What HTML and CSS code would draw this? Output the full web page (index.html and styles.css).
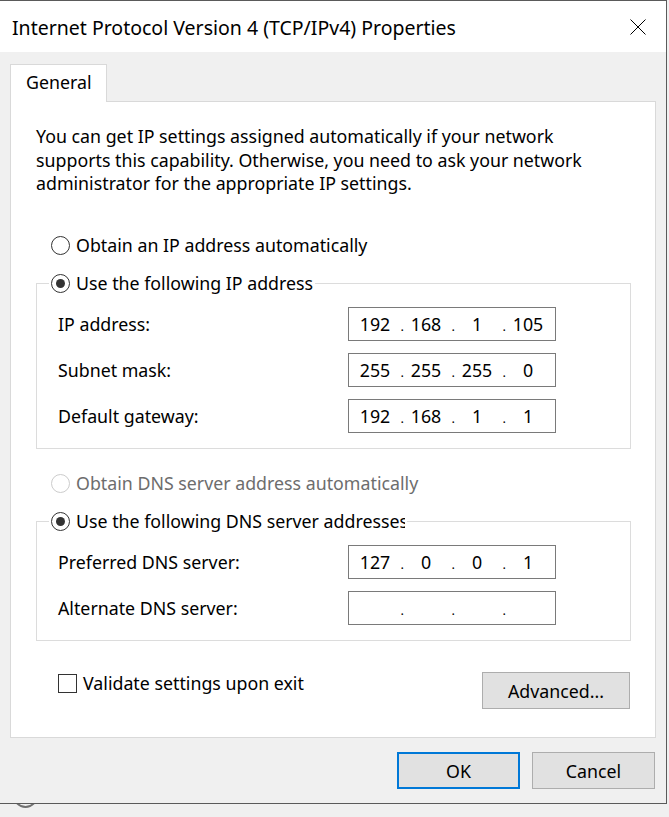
FILE: index.html
```html
<!DOCTYPE html>
<html>
<head>
<meta charset="utf-8">
<title>Internet Protocol Version 4 (TCP/IPv4) Properties</title>
<link rel="stylesheet" href="styles.css">
</head>
<body>
<div class="desk-circle"></div>
<div class="window">
  <div class="titlebar">
    <span class="title">Internet Protocol Version 4 (TCP/IPv4) Properties</span>
    <svg class="close" width="16" height="16" viewBox="0 0 16 16"><path d="M0.5 0.5 L15.5 15.5 M15.5 0.5 L0.5 15.5" stroke="#000" stroke-width="1" fill="none"/></svg>
  </div>
  <div class="client">
    <div class="tabs"><div class="tab">General</div></div>
    <div class="panel">
      <p class="desc">You can get IP settings assigned automatically if your network<br>supports this capability. Otherwise, you need to ask your network<br>administrator for the appropriate IP settings.</p>

      <div class="option first"><span class="radio"></span><span>Obtain an IP address automatically</span></div>

      <fieldset class="group">
        <legend class="legend"><span class="radio checked"></span><span class="legend-text">Use the following IP address</span></legend>
        <div class="rows">
          <span class="label">IP address:</span>
          <div class="ip"><span class="seg">192</span><span class="dot">.</span><span class="seg">168</span><span class="dot">.</span><span class="seg">1</span><span class="dot">.</span><span class="seg">105</span></div>
          <span class="label">Subnet mask:</span>
          <div class="ip"><span class="seg">255</span><span class="dot">.</span><span class="seg">255</span><span class="dot">.</span><span class="seg">255</span><span class="dot">.</span><span class="seg">0</span></div>
          <span class="label">Default gateway:</span>
          <div class="ip"><span class="seg">192</span><span class="dot">.</span><span class="seg">168</span><span class="dot">.</span><span class="seg">1</span><span class="dot">.</span><span class="seg">1</span></div>
        </div>
      </fieldset>

      <div class="option disabled"><span class="radio"></span><span>Obtain DNS server address automatically</span></div>

      <fieldset class="group dns">
        <legend class="legend"><span class="radio checked"></span><span class="legend-text clip">Use the following DNS server addresses</span></legend>
        <div class="rows">
          <span class="label">Preferred DNS server:</span>
          <div class="ip"><span class="seg">127</span><span class="dot">.</span><span class="seg">0</span><span class="dot">.</span><span class="seg">0</span><span class="dot">.</span><span class="seg">1</span></div>
          <span class="label">Alternate DNS server:</span>
          <div class="ip"><span class="seg"></span><span class="dot">.</span><span class="seg"></span><span class="dot">.</span><span class="seg"></span><span class="dot">.</span><span class="seg"></span></div>
        </div>
      </fieldset>

      <div class="bottom-row">
        <div class="check-row"><span class="checkbox"></span><span>Validate settings upon exit</span></div>
        <button class="btn advanced">Advanced...</button>
      </div>
    </div>
    <div class="actions">
      <button class="btn ok">OK</button>
      <button class="btn">Cancel</button>
    </div>
  </div>
</div>
</body>
</html>
```

FILE: styles.css
```css
* { box-sizing: border-box; }
html, body { margin: 0; padding: 0; }
body {
  width: 669px;
  height: 817px;
  overflow: hidden;
  position: relative;
  background: #f0f0f0;
  font-family: "Noto Sans", "Open Sans", sans-serif;
  font-size: 17.8px;
  color: #000;
}
.desk-circle {
  position: absolute;
  left: 13px;
  top: 783px;
  width: 25px;
  height: 25px;
  border: 2px solid #707070;
  border-radius: 50%;
}
.window {
  position: relative;
  width: 667px;
  height: 804px;
  border-top: 1px solid #5a5a5a;
  border-right: 1px solid #5a5a5a;
  border-bottom: 1px solid #5a5a5a;
  background: #f0f0f0;
  display: flex;
  flex-direction: column;
}
.titlebar {
  height: 51px;
  flex: none;
  background: #fff;
  display: flex;
  justify-content: space-between;
  align-items: flex-start;
  padding: 15px 20px 0 12px;
}
.title { font-size: 19.5px; line-height: 24px; }
.close { margin-top: 3px; display: block; }
.client {
  flex: 1;
  padding: 12px 10px 0 10px;
  display: flex;
  flex-direction: column;
}
.tabs { display: flex; position: relative; z-index: 1; margin-bottom: -1px; }
.tab {
  width: 97px;
  height: 38px;
  border: 1px solid #d9d9d9;
  border-bottom: none;
  background: #fff;
  padding-left: 15px;
  line-height: 34px;
}
.panel {
  border: 1px solid #d9d9d9;
  background: #fff;
  padding: 23px 0 28px 25px;
  display: flex;
  flex-direction: column;
  align-items: flex-start;
}
.desc { margin: 0; line-height: 23.5px; }
.option {
  display: flex;
  align-items: center;
  height: 24px;
  gap: 6px;
  margin-left: 15px;
  white-space: nowrap;
}
.option.first { margin-top: 37.5px; }
.option.disabled { margin-top: 22px; color: #6d6d6d; }
.radio {
  width: 19px;
  height: 19px;
  flex: none;
  border: 1px solid #333;
  border-radius: 50%;
  background: #fff;
  display: flex;
  align-items: center;
  justify-content: center;
}
.radio.checked::after {
  content: "";
  width: 9px;
  height: 9px;
  border-radius: 50%;
  background: #333;
}
.option.disabled .radio { border-color: #cccccc; }
.group {
  width: 595px;
  margin: 14px 0 0 0;
  border: 1px solid #dcdcdc;
  padding: 12px 0 15px 0;
  min-width: 0;
}
.legend {
  display: flex;
  align-items: center;
  height: 24px;
  gap: 6px;
  padding: 0 2px;
  margin-left: 12px;
  white-space: nowrap;
}
.legend-text.clip {
  width: 329px;
  overflow: hidden;
}
.rows {
  display: grid;
  grid-template-columns: 290px 208px;
  row-gap: 12px;
  align-items: center;
  padding-left: 21px;
}
.ip {
  width: 208px;
  height: 34px;
  border: 1px solid #7a7a7a;
  padding-left: 4px;
  display: flex;
  align-items: center;
  background: #fff;
}
.seg { width: 44px; text-align: center; }
.dot { width: 7px; text-align: right; font-size: 13px; padding-top: 3px; }
.bottom-row {
  width: 594px;
  margin-top: 31px;
  padding-left: 22px;
  display: flex;
  justify-content: space-between;
  align-items: flex-start;
}
.check-row {
  display: flex;
  align-items: center;
  gap: 6px;
  height: 22px;
}
.checkbox {
  width: 19px;
  height: 19px;
  border: 1px solid #333;
  background: #fff;
}
.btn {
  font: inherit;
  color: #000;
  background: #e1e1e1;
  border: 1px solid #adadad;
  height: 37px;
  padding: 0;
  margin: 0;
}
.advanced { width: 148px; }
.actions {
  display: flex;
  justify-content: flex-end;
  gap: 12px;
  margin-top: 14px;
  padding-right: 1px;
}
.actions .btn { width: 123px; }
.btn.ok { border: 2px solid #0078d7; }
```
